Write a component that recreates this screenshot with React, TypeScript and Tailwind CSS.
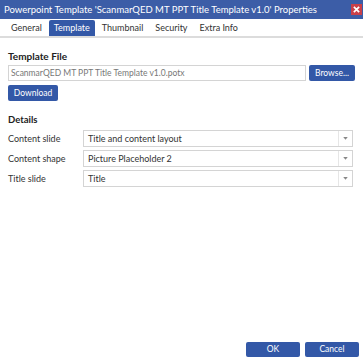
import React from 'react'

const font = { fontFamily: 'Lato, "Open Sans", sans-serif' }

const tabs = ['General', 'Template', 'Thumbnail', 'Security', 'Extra Info']

function Select({ value }: { value: string }) {
    return (
        <div className="flex-1 h-[17px] flex items-center border border-[#d4d4d4] bg-white">
            <span className="flex-1 pl-[4px] text-[9px] text-[#333] leading-none">{value}</span>
            <span className="w-[14px] h-full flex items-center justify-center border-l border-[#e6e6e6]">
                <svg width="5" height="3" viewBox="0 0 6 4">
                    <path d="M0 0 L6 0 L3 3.5 Z" fill="#888" />
                </svg>
            </span>
        </div>
    )
}

export default function App() {
    const rows = [
        ['Content slide', 'Title and content layout'],
        ['Content shape', 'Picture Placeholder 2'],
        ['Title slide', 'Title'],
    ]

    return (
        <div className="w-[363px] h-[358px] bg-white flex flex-col overflow-hidden" style={font}>
            {/* title bar */}
            <div className="h-[19px] bg-[#3c5da7] flex items-center justify-between pl-[4px] pr-[1px]">
                <span className="text-white text-[9.5px] leading-none whitespace-nowrap">
                    Powerpoint Template 'ScanmarQED MT PPT Title Template v1.0' Properties
                </span>
                <span className="w-[11px] h-[11px] bg-[#c9404a] flex items-center justify-center">
                    <svg width="7" height="7" viewBox="0 0 8 8">
                        <path d="M1 1 L7 7 M7 1 L1 7" stroke="white" strokeWidth="2" />
                    </svg>
                </span>
            </div>

            {/* tabs */}
            <div className="flex items-end gap-[2px] pl-[6px] h-[19px] border-b-2 border-[#dcdcdc]">
                {tabs.map((t) => (
                    <span
                        key={t}
                        className={
                            t === 'Template'
                                ? 'h-[16px] px-[5px] flex items-center bg-[#3358a7] text-white text-[9px] rounded-t-[2px]'
                                : 'h-[16px] px-[5px] flex items-center text-[#333] text-[9px]'
                        }
                    >
                        {t}
                    </span>
                ))}
            </div>

            <div className="flex flex-col px-[8px] pt-[13px]">
                <div className="text-[10px] font-bold text-[#222] leading-none">Template File</div>

                <div className="flex gap-[3px] mt-[4px]">
                    <div className="flex-1 h-[16px] flex items-center border border-[#d4d4d4] pl-[2px] text-[8.5px] text-[#777] leading-none">
                        ScanmarQED MT PPT Title Template v1.0.potx
                    </div>
                    <button className="w-[46px] h-[16px] bg-[#3358a7] text-white text-[8.5px] rounded-[2px] leading-none">
                        Browse...
                    </button>
                </div>

                <button className="self-start mt-[4px] w-[50px] h-[16px] bg-[#3358a7] text-white text-[8.5px] rounded-[2px] leading-none">
                    Download
                </button>

                <div className="text-[9.5px] font-bold text-[#222] leading-none mt-[14px]">Details</div>

                <div className="flex flex-col gap-[3px] mt-[5px] pr-[2px]">
                    {rows.map(([label, value]) => (
                        <div key={label} className="flex items-center">
                            <span className="w-[75px] text-[9px] text-[#333] leading-none">{label}</span>
                            <Select value={value} />
                        </div>
                    ))}
                </div>
            </div>

            <div className="flex-1" />

            <div className="flex justify-end gap-[5px] pr-[4px] pb-[1px]">
                <button className="w-[54px] h-[15px] bg-[#3358a7] text-white text-[8.5px] rounded-[2px] leading-none">
                    OK
                </button>
                <button className="w-[54px] h-[15px] bg-[#3358a7] text-white text-[8.5px] rounded-[2px] leading-none">
                    Cancel
                </button>
            </div>
        </div>
    )
}
